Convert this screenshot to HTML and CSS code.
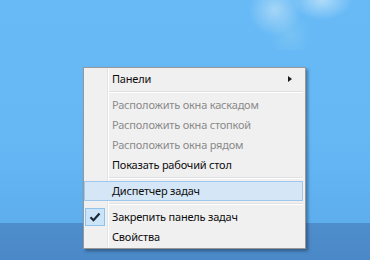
FILE: index.html
```html
<!DOCTYPE html>
<html lang="ru">
<head>
    <meta charset="UTF-8">
    <title>Контекстное меню панели задач</title>
    <link rel="stylesheet" href="styles.css">
</head>
<body>
    <div class="screen">
        <div class="desktop">
            <div class="cloud"></div>
        </div>
        <div class="taskbar"></div>

        <ul class="menu">
            <li class="item">
                <span class="gutter"></span>
                <span class="label">Панели</span>
                <span class="arrow"></span>
            </li>
            <li class="sep"></li>
            <li class="item disabled"><span class="gutter"></span><span class="label">Расположить окна каскадом</span></li>
            <li class="item disabled"><span class="gutter"></span><span class="label">Расположить окна стопкой</span></li>
            <li class="item disabled"><span class="gutter"></span><span class="label">Расположить окна рядом</span></li>
            <li class="item"><span class="gutter"></span><span class="label">Показать рабочий стол</span></li>
            <li class="sep"></li>
            <li class="item hover"><span class="gutter"></span><span class="label">Диспетчер задач</span></li>
            <li class="sep"></li>
            <li class="item">
                <span class="gutter">
                    <span class="check">
                        <svg width="12" height="10" viewBox="0 0 12 10"><path d="M1.5 5.2 L4.5 8.2 L10.5 1.5" fill="none" stroke="#1b2a3a" stroke-width="2.2"/></svg>
                    </span>
                </span>
                <span class="label">Закрепить панель задач</span>
            </li>
            <li class="item"><span class="gutter"></span><span class="label">Свойства</span></li>
        </ul>
    </div>
</body>
</html>
```

FILE: styles.css
```css
html, body { margin: 0; padding: 0; }
body { font-family: "Noto Sans", "Open Sans", Arial, sans-serif; font-size: 11px; letter-spacing: -0.2px; color: #0d0d0d; }

.screen { position: relative; width: 370px; height: 260px; overflow: hidden; display: flex; flex-direction: column; }
.desktop { position: relative; height: 223px; background: linear-gradient(180deg, #68baf6 0%, #66b8f5 60%, #5eaeee 100%); }
.cloud { position: absolute; left: 230px; top: -40px; width: 130px; height: 90px;
    background: radial-gradient(ellipse 26px 26px at 45px 50px, rgba(205,232,248,0.6), rgba(120,195,245,0) 100%),
                radial-gradient(ellipse 30px 20px at 92px 40px, rgba(215,238,250,0.65), rgba(120,195,245,0) 100%),
                radial-gradient(ellipse 20px 24px at 60px 75px, rgba(140,205,240,0.45), rgba(120,195,245,0) 100%);
}
.taskbar { flex: 1; background: linear-gradient(180deg, #4f8ecd 0%, #4a88c7 100%); }

.menu {
    position: absolute; left: 83px; top: 67px; width: 219px;
    margin: 0; padding: 1px 2px 1px 0; list-style: none;
    background: #f0f0f0; border: 1px solid #979797;
    box-shadow: 2px 2px 3px rgba(0,0,0,0.35);
}
.item { position: relative; display: flex; align-items: center; height: 20px; border: 1px solid transparent; box-sizing: border-box; }
.item .gutter { width: 22px; height: 100%; display: flex; align-items: center; }
.item .label { padding-left: 4px; border-left: 1px solid #e2e3e3; box-shadow: inset 1px 0 0 #fff; height: 20px; line-height: 19px; margin: -1px 0; flex: 1; }
.item.disabled { color: #8a8a8a; }
.item.hover { background: #d5e6f7; border-color: #9fc6ec; }
.item.hover .label { border-left-color: transparent; box-shadow: none; }

.arrow { position: absolute; right: 10px; top: 6px; width: 0; height: 0;
    border-top: 3.5px solid transparent; border-bottom: 3.5px solid transparent; border-left: 4px solid #1b1b1b; }

.check { display: flex; align-items: center; justify-content: center; width: 18px; height: 16px;
    background: #cce4f7; border: 1px solid #8ec3ee; }

.sep { height: 6px; position: relative; display: flex; }
.sep::before { content: ""; width: 23px; border-right: 1px solid #e2e3e3; box-shadow: 1px 0 0 #fff; }
.sep::after { content: ""; flex: 1; margin: 2px 0 2px 1px; border-top: 1px solid #e0e0e0; border-bottom: 1px solid #fff; }
```
